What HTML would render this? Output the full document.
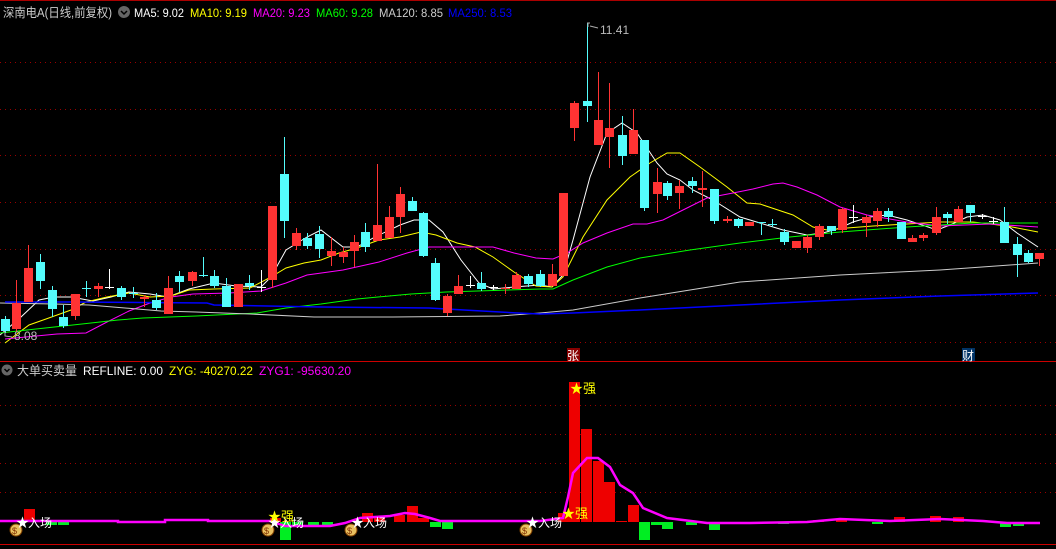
<!DOCTYPE html>
<html><head><meta charset="utf-8"><style>
html,body{margin:0;padding:0;background:#000;width:1056px;height:549px;overflow:hidden}
svg{display:block}
text{font-family:"Liberation Sans","Noto Sans CJK SC",sans-serif}
</style></head><body>
<svg id="s" width="1056" height="549" xmlns="http://www.w3.org/2000/svg">
<rect width="1056" height="549" fill="#000"/>
<line x1="0" y1="0.5" x2="1056" y2="0.5" stroke="#a00" />
<g id="grid" stroke="#900" stroke-dasharray="1,4" stroke-width="1"></g>
<line x1="0" y1="361.5" x2="1056" y2="361.5" stroke="#c00"/>
<line x1="0" y1="544.5" x2="1056" y2="544.5" stroke="#c00"/>
<g id="ma"></g>
<g id="cd"></g>
<g id="low"></g>
<!-- header -->
<text x="3" y="17" font-size="12.5" fill="#ccc" textLength="109" lengthAdjust="spacingAndGlyphs">深南电A(日线,前复权)</text>
<circle cx="124" cy="12" r="6" fill="#666"/><path d="M121 11 l3 3 l3 -3" stroke="#000" stroke-width="1.5" fill="none"/>
<text x="134" y="17" font-size="12" fill="#fff" textLength="50" lengthAdjust="spacingAndGlyphs">MA5: 9.02</text>
<text x="190" y="17" font-size="12" fill="#ff0" textLength="57" lengthAdjust="spacingAndGlyphs">MA10: 9.19</text>
<text x="253" y="17" font-size="12" fill="#f0f" textLength="57" lengthAdjust="spacingAndGlyphs">MA20: 9.23</text>
<text x="316" y="17" font-size="12" fill="#0f0" textLength="57" lengthAdjust="spacingAndGlyphs">MA60: 9.28</text>
<text x="379" y="17" font-size="12" fill="#ccc" textLength="64" lengthAdjust="spacingAndGlyphs">MA120: 8.85</text>
<text x="448" y="17" font-size="12" fill="#00f" textLength="64" lengthAdjust="spacingAndGlyphs">MA250: 8.53</text>
<path d="M587 23 h3 M588 23 v4 M590 26 l8 2" stroke="#aaa" fill="none"/>
<text x="600" y="34" font-size="12" fill="#bbb">11.41</text>
<path d="M5 332 v4 l7 1" stroke="#aaa" fill="none"/>
<text x="14" y="340" font-size="12" fill="#bbb">8.08</text>
<rect x="567" y="348" width="13" height="13" fill="#800"/><text x="567" y="360" font-size="12" fill="#fff">张</text>
<rect x="962" y="348" width="13" height="13" fill="#036"/><text x="962" y="360" font-size="12" fill="#fff">财</text>
<circle cx="7" cy="370" r="5.5" fill="#666"/><path d="M4.5 369 l2.5 2.5 l2.5 -2.5" stroke="#000" stroke-width="1.5" fill="none"/>
<text x="17" y="375" font-size="12.5" fill="#ccc" textLength="60" lengthAdjust="spacingAndGlyphs">大单买卖量</text>
<text x="83" y="375" font-size="12" fill="#fff" textLength="80" lengthAdjust="spacingAndGlyphs">REFLINE: 0.00</text>
<text x="169" y="375" font-size="12" fill="#ff0" textLength="84" lengthAdjust="spacingAndGlyphs">ZYG: -40270.22</text>
<text x="259" y="375" font-size="12" fill="#f0f" textLength="92" lengthAdjust="spacingAndGlyphs">ZYG1: -95630.20</text>
<g id="lab"></g>
</svg>
<script>
var NS="http://www.w3.org/2000/svg";
function el(p,t,a){var e=document.createElementNS(NS,t);for(var k in a)e.setAttribute(k,a[k]);document.getElementById(p).appendChild(e);return e;}
[62,109,155,202,249,295,342,405,434,463,492].forEach(function(y){el("grid","line",{x1:0,x2:1056,y1:y+0.5,y2:y+0.5});});
var C=[[5,'c',319,331,316,333],[16,'r',303,329,280,332],[28,'r',268,302,245,302],[40,'c',262,281,254,289],[52,'c',290,309,286,317],[63,'c',317,326,305,328],[75,'r',294,316,294,320],[86,'c',288,289,281,297],[98,'r',286,289,283,297],[109,'w',287,288,269,289],[121,'c',288,297,286,300],[133,'c',293,294,287,298],[144,'r',297,299,295,307],[156,'c',300,308,293,310],[168,'r',288,314,276,314],[179,'c',276,282,271,292],[192,'r',272,281,271,286],[203,'c',275,276,257,277],[214,'c',276,286,270,288],[226,'c',286,307,278,307],[238,'r',284,307,284,307],[249,'c',283,286,275,290],[261,'w',287,288,270,292],[272,'r',206,280,206,288],[284,'c',174,221,137,238],[296,'r',233,246,228,250],[307,'c',238,246,233,249],[319,'c',234,249,226,258],[331,'r',251,256,237,266],[343,'r',252,257,247,263],[354,'r',242,251,235,267],[365,'c',232,247,223,252],[377,'r',225,241,164,241],[389,'r',217,238,206,238],[400,'r',194,217,187,233],[412,'c',201,211,197,211],[423,'c',213,256,212,257],[435,'c',263,300,258,301],[447,'r',296,313,294,316],[458,'r',286,294,275,294],[470,'w',285,286,276,288],[481,'c',283,289,272,291],[493,'w',287,288,285,290],[505,'r',288,289,284,294],[516,'r',275,289,272,289],[528,'c',276,284,274,287],[540,'c',274,286,270,287],[552,'r',274,286,264,286],
[563,'r',193,276,193,276],[574,'r',103,128,101,141],[587,'c',101,106,23,122],[598,'r',120,145,72,145],[609,'r',128,137,83,168],[622,'c',135,156,116,165],[633,'r',130,154,109,154],[644,'c',140,208,140,211],[657,'r',182,194,168,213],[667,'c',183,196,181,200],[679,'r',186,193,180,209],[692,'c',181,186,177,193],[702,'r',188,190,171,207],[714,'c',189,221,189,224],[727,'r',219,221,216,223],[738,'c',219,226,218,228],[749,'r',222,226,222,226],[761,'c',222,223,222,235],[772,'c',224,225,219,227],[784,'c',232,242,229,245],[796,'r',241,248,241,248],[807,'r',237,248,235,253],[819,'r',226,237,224,240],[831,'c',226,231,226,235],[842,'r',209,230,208,233],[853,'w',217,218,205,223],[866,'r',217,223,215,237],[877,'r',211,221,208,227],[888,'c',211,217,208,222],[901,'c',222,239,222,239],[912,'r',238,242,235,242],[923,'r',235,238,233,241],[936,'r',217,233,207,235],[947,'c',214,218,212,224],[958,'r',209,222,206,222],[970,'c',205,213,205,222],[982,'w',216,217,214,219],[993,'w',221,222,217,224],[1004,'c',222,243,207,243],[1017,'c',244,255,237,277],[1028,'c',253,262,250,263],[1039,'r',253,259,253,266]];
var col={r:'#ff3333',c:'#54fcfc',w:'#ffffff'};
C.forEach(function(d){var c=col[d[1]];el("cd","line",{x1:d[0]+0.5,x2:d[0]+0.5,y1:d[4],y2:d[5],stroke:c});
 var h=Math.max(1,d[3]-d[2]);el("cd","rect",{x:d[0]-4,y:d[2],width:9,height:h,fill:c});});
function pl(p,pts,c,w){el(p,"polyline",{points:pts,fill:"none",stroke:c,"stroke-width":w||1});}
pl("ma","0,335 21,317 39,300 54,297 71,297 93,301 111,297 129,292 150,294 168,297 189,289 214,283 236,286 261,287 271,277 286,250 307,237 321,230 343,247 357,247 375,237 400,225 414,220 429,220 443,232 461,260 479,283 493,289 514,287 540,285 552,287 563,275 573,240 590,177 607,133 622,123 637,133 657,163 667,174 680,180 693,190 713,200 740,217 760,223 783,230 807,235 823,233 840,228 853,222 870,217 887,215 907,220 937,230 950,225 967,217 983,215 1000,220 1017,233 1038,247","#fff");
pl("ma","5,343 29,325 46,319 71,310 86,302 107,297 129,293 150,297 171,296 189,290 214,289 250,288 271,277 286,268 304,263 321,260 339,253 357,248 379,240 400,237 421,232 436,235 457,243 475,247 493,257 514,272 536,286 552,287 563,277 583,237 607,200 630,177 650,163 667,153 680,153 700,167 727,187 747,203 760,204 793,215 813,227 827,230 847,228 873,226 907,224 940,222 973,222 1007,226 1038,232","#ff0");
pl("ma","5,339 57,334 86,333 107,322 129,311 150,303 171,297 193,294 229,293 261,291 286,283 307,275 343,270 379,262 407,253 429,247 493,247 514,253 536,258 553,259 567,253 583,243 607,233 633,224 647,224 663,220 683,210 707,198 733,193 753,189 773,184 783,183 797,187 817,195 840,207 867,215 907,222 940,226 990,224 1038,227","#f0f");
pl("ma","0,333 36,329 82,324 118,320 143,318 196,316 257,313 286,308 321,304 357,299 411,294 446,292 540,289 553,289 573,280 607,267 640,258 690,250 740,243 790,237 840,232 907,227 973,223 1038,223","#0f0");
pl("ma","0,303 54,304 89,305 125,308 161,311 196,312 250,314 314,317 393,317 500,316 540,313 573,310 640,298 740,282 840,275 940,270 1038,263","#ccc");
pl("ma","5,302 71,302 207,303 214,305 321,307 429,308 464,310 518,313 540,314 573,313 640,310 740,305 840,300 940,296 1038,293","#00f",1.5);
var B=[[24,509,522,'r'],[46,522,525,'g'],[58,522,525,'g'],[270,518,522,'r'],[280,522,540,'g'],[292,522,526,'g'],[308,522,526,'g'],[322,522,525,'g'],[362,513,522,'r'],[374,518,522,'r'],[394,515,522,'r'],[407,506,522,'r'],[418,518,522,'r'],[430,522,527,'g'],[442,522,529,'g'],[558,513,522,'r'],[569,382,522,'r'],[581,429,522,'r'],[593,461,522,'r'],[604,482,522,'r'],[616,521,522,'r'],[628,505,522,'r'],[639,522,540,'g'],[651,522,525,'g'],[662,522,529,'g'],[686,522,525,'g'],[709,522,530,'g'],[778,522,524,'g'],[813,520,522,'r'],[836,519,522,'r'],[872,522,524,'g'],[894,517,522,'r'],[930,516,522,'r'],[953,517,522,'r'],[1000,522,527,'g'],[1013,522,526,'g']];
B.forEach(function(b){el("low","rect",{x:b[0],y:b[1],width:11,height:b[2]-b[1],fill:b[3]=='r'?'#ee0000':'#00ee22'});});
pl("low","0,521 118,521 118,522 165,522 165,520 208,520 208,521 258,521 270,521 285,526 330,526 345,523 360,518 390,516 405,513 415,514 430,518 440,521 540,521 563,518 568,497 573,473 587,458 598,458 610,467 620,485 633,493 643,508 667,518 707,523 750,523 807,522 840,519 890,521 940,519 983,521 1007,523 1040,523","#f0f",2.5);
function lab(x){
 el("lab","circle",{cx:x+6,cy:530,r:6,fill:"#e8c060",stroke:"#804000"});
 var t=el("lab","text",{x:x+2,y:534,"font-size":"9",fill:"#803000"});t.textContent="$";
 var s=el("lab","text",{x:x+6,y:527,"font-size":"13",fill:"#fff"});s.textContent="★";
 var r=el("lab","text",{x:x+18,y:527,"font-size":"12",fill:"#fff"});r.textContent="入场";
}
lab(10);lab(262);lab(345);lab(520);
[[268,521],[562,518],[570,393]].forEach(function(q){var t=el("lab","text",{x:q[0],y:q[1],"font-size":"13",fill:"#ff0"});t.textContent="★强";});
</script>
</body></html>
